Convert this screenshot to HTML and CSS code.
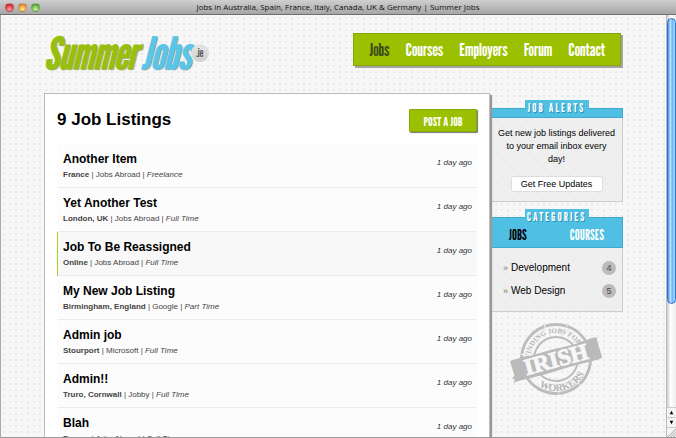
FILE: index.html
```html
<!DOCTYPE html>
<html lang="en">
<head>
<meta charset="utf-8">
<title>Jobs in Australia, Spain, France, Italy, Canada, UK &amp; Germany | Summer Jobs</title>
<link rel="stylesheet" href="styles.css">
</head>
<body>
<div class="titlebar">
  <div class="lights"><span class="light red"></span><span class="light amber"></span><span class="light green"></span></div>
  <div class="window-title">Jobs in Australia, Spain, France, Italy, Canada, UK &amp; Germany | Summer Jobs</div>
</div>
<div class="window">
  <div class="page">
    <div class="container">
      <header class="header">
        <a class="logo" href="#"><span class="logo-summer">Summer</span><span class="logo-jobs">Jobs</span><span class="logo-ie">.ie</span></a>
        <nav class="nav">
          <a class="current" href="#">Jobs</a><a href="#">Courses</a><a href="#">Employers</a><a href="#">Forum</a><a href="#">Contact</a>
        </nav>
      </header>
      <div class="columns">
        <main class="card">
          <div class="card-head">
            <h1>9 Job Listings</h1>
            <button class="post" type="button">POST A JOB</button>
          </div>
          <ul class="jobs">
            <li class="job"><div><h2>Another Item</h2><p><b>France</b> | Jobs Abroad | <i>Freelance</i></p></div><time>1 day ago</time></li>
            <li class="job"><div><h2>Yet Another Test</h2><p><b>London, UK</b> | Jobs Abroad | <i>Full Time</i></p></div><time>1 day ago</time></li>
            <li class="job active"><div><h2>Job To Be Reassigned</h2><p><b>Online</b> | Jobs Abroad | <i>Full Time</i></p></div><time>1 day ago</time></li>
            <li class="job"><div><h2>My New Job Listing</h2><p><b>Birmingham, England</b> | Google | <i>Part Time</i></p></div><time>1 day ago</time></li>
            <li class="job"><div><h2>Admin job</h2><p><b>Stourport</b> | Microsoft | <i>Full Time</i></p></div><time>1 day ago</time></li>
            <li class="job"><div><h2>Admin!!</h2><p><b>Truro, Cornwall</b> | Jobby | <i>Full Time</i></p></div><time>1 day ago</time></li>
            <li class="job"><div><h2>Blah</h2><p><b>France</b> | Jobs Abroad | <i>Full Time</i></p></div><time>1 day ago</time></li>
          </ul>
        </main>
        <aside class="sidebar">
          <section class="panel">
            <h3 class="tab">JOB ALERTS</h3>
            <div class="strip"></div>
            <div class="panel-body alerts">
              <p>Get new job listings delivered to your email inbox every day!</p>
              <button class="updates" type="button">Get Free Updates</button>
            </div>
          </section>
          <section class="panel">
            <h3 class="tab">CATEGORIES</h3>
            <div class="strip tabs"><a class="current" href="#">JOBS</a><a href="#">COURSES</a></div>
            <ul class="panel-body categories">
              <li><span class="mark">»</span><a href="#">Development</a><span class="count">4</span></li>
              <li><span class="mark">»</span><a href="#">Web Design</a><span class="count">5</span></li>
            </ul>
          </section>
          <svg class="stamp" viewBox="0 0 94 76" role="img" aria-label="Finding jobs for Irish workers">
            <defs>
              <path id="arc-top" d="M21 38a26 26 0 0 1 52 0"/>
              <path id="arc-bottom" d="M15 38a32 32 0 0 0 64 0"/>
            </defs>
            <g transform="rotate(-15 47 38)">
              <circle class="ring" cx="47" cy="38" r="34.500" stroke-width="3" stroke-dasharray="37 1 22 .6 41 .8 19 1"/>
              <circle class="ring" cx="47" cy="38" r="22" stroke-width="2"/>
              <text class="arc-text small"><textPath href="#arc-top" startOffset="50%">FINDING JOBS FOR</textPath></text>
              <text class="arc-text"><textPath href="#arc-bottom" startOffset="50%">WORKERS</textPath></text>
              <path class="band" d="M2 28l15-.5 1 1 26-.5 25 .5 18-1.500 5 .5-.5 4 .5 17-4 1-26-.5-30 1-25-.5-7 .5 2-3-2.500-1 3-3z"/>
              <text class="irish" x="47" y="46">IRISH</text>
            </g>
          </svg>
        </aside>
      </div>
    </div>
  </div>
  <div class="scrollbar">
    <div class="thumb"></div>
    <div class="arrow"><svg viewBox="0 0 10 10"><path d="M5 3l2 4H3z"/></svg></div>
    <div class="arrow"><svg viewBox="0 0 10 10"><path d="M5 7l2-4H3z"/></svg></div>
    <div class="grip"><svg viewBox="0 0 10 10"><path d="M1 10l9-9M4 10l6-6M7 10l3-3" fill="none" stroke="#999"/></svg></div>
  </div>
</div>
</body>
</html>
```

FILE: styles.css
```css
:root {
  --narrow: "League Gothic", "Roboto Condensed", "Open Sans Condensed", "Noto Sans CJK JP", sans-serif;
}

* { box-sizing: border-box; margin: 0; padding: 0; }

body {
  display: flex;
  flex-direction: column;
  height: 100vh;
  overflow: hidden;
  background: #f6f6f6;
  color: #000;
  font-family: "Liberation Sans", Arial, sans-serif;
  font-size: 10px;
}

a { color: inherit; text-decoration: none; }
ul { list-style: none; }
button { font-family: inherit; cursor: pointer; }

.titlebar {
  display: grid;
  grid-template-columns: 40px 1fr 40px;
  align-items: center;
  flex: none;
  height: 15px;
  background: linear-gradient(#cfcfcf, #a6a6a6);
  border-bottom: 1px solid #6f6f6f;
}
.lights { display: flex; gap: 4px; padding-left: 5px; }
.light { width: 9px; height: 9px; border-radius: 50%; border: 1px solid #8886; }
.red { background: radial-gradient(circle at 50% 75%, #ffb0a8, #e0343a 60%, #a01820); }
.amber { background: radial-gradient(circle at 50% 75%, #ffe9a0, #f09a38 60%, #b06010); }
.green { background: radial-gradient(circle at 50% 75%, #d0f5a0, #68b648 60%, #3a7a20); }
.window-title {
  text-align: center;
  color: #111;
  font-family: "Open Sans", sans-serif;
  font-size: 8px;
  line-height: 14px;
}

.window {
  display: flex;
  flex: 1;
  min-height: 0;
  border-left: 1px solid #aaa;
  border-bottom: 1px solid #999;
}
.page {
  flex: 1;
  overflow: hidden;
  padding: 0 43px;
  background: radial-gradient(circle, #e9e9e9 0, #e9e9e9 1px, transparent 1px) 0 0 / 6px 6px #f7f7f7;
}
.container { max-width: 640px; margin: 0 auto; }

.header {
  display: flex;
  justify-content: space-between;
  align-items: flex-start;
  height: 78px;
  padding-top: 18px;
}
.logo {
  display: flex;
  align-items: center;
  font-family: var(--narrow);
  font-size: 44px;
  font-style: italic;
  font-weight: 400;
  line-height: 40px;
}
.logo-summer { color: #97bf0d; -webkit-text-stroke: 1px #97bf0d; text-shadow: 1px 1px 1px #999; }
.logo-jobs { margin-left: 4px; color: #5bc5e8; -webkit-text-stroke: 1px #5bc5e8; text-shadow: 1px 1px 1px #999; }
.logo-ie {
  width: 18px;
  height: 18px;
  border-radius: 50%;
  background: linear-gradient(#e6e6e6, #cfcfcf);
  color: #555;
  font-size: 12px;
  font-style: normal;
  line-height: 18px;
  text-align: center;
}
.nav {
  display: flex;
  gap: 16px;
  margin-right: 2px;
  padding: 0 15px;
  background: #9bc000;
  border: 1px solid #86a60a;
  box-shadow: 2px 2px 0 #a3a3a3;
  color: #fff;
  font-family: var(--narrow);
  font-size: 18px;
  font-weight: 400;
  line-height: 31px;
}
.nav .current { color: #3d4a1a; }

.columns { display: flex; align-items: flex-start; }
.card {
  flex: 1;
  padding: 12px;
  background: #fff;
  border: 1px solid #bbb;
  box-shadow: 2px 2px 1px #999;
  position: relative;
}
.card-head { display: flex; justify-content: space-between; height: 38px; padding-top: 3px; }
h1 { font-size: 17px; line-height: 22px; }
.post {
  width: 68px;
  height: 23px;
  background: #9bc000;
  border: 1px solid #89a80c;
  border-radius: 1px;
  box-shadow: 1px 1px 1px #777;
  color: #fff;
  font-family: var(--narrow);
  font-size: 13px;
  font-weight: 400;
  line-height: 20px;
  white-space: nowrap;
}
.job {
  display: flex;
  justify-content: space-between;
  height: 44px;
  padding: 7px 5px 0;
  background: #fcfcfc;
  box-shadow: inset 0 -1px 0 #ebebeb;
  border-left: 1px solid transparent;
}
.job.active { background: #f8f8f8; border-left-color: #a4d030; }
.job h2 { font-size: 12px; line-height: 16px; }
.job p { margin-top: 2px; color: #444; font-size: 8px; line-height: 12px; }
.job time { color: #333; font-size: 8px; font-style: italic; line-height: 24px; }

.sidebar { width: 133px; padding-top: 7px; }
.panel { margin-bottom: 7px; }
.tab {
  width: 64px;
  height: 16px;
  margin: 0 auto -8px;
  position: relative;
  background: #4fbfe3;
  color: #fff;
  font-family: var(--narrow);
  font-size: 12px;
  font-weight: 400;
  letter-spacing: 2px;
  line-height: 16px;
  text-align: center;
  text-shadow: 1px 1px 0 #2c8fb0;
  white-space: nowrap;
}
.strip { height: 10px; background: #4fbfe3; border: 1px solid #42a9cb; }
.tabs {
  display: flex;
  justify-content: space-between;
  height: 31px;
  padding: 8px 18px 0;
  color: #fff;
  font-family: var(--narrow);
  font-size: 14px;
  line-height: 18px;
}
.tabs .current { color: #000; }
.panel-body {
  background: repeating-linear-gradient(45deg, #ececec 0, #ececec 1px, #f1f1f1 1px, #f1f1f1 2px);
  border: 1px solid #ccc;
  border-top: 0;
}
.alerts { padding: 9px 6px; text-align: center; }
.alerts p { font-size: 9px; line-height: 13px; }
.updates {
  width: 92px;
  height: 16px;
  margin-top: 10px;
  background: #fff;
  border: 1px solid #ddd;
  border-radius: 3px;
  font-size: 9px;
  line-height: 14px;
}
.categories { padding: 8px 6px 9px; }
.categories li { display: flex; align-items: center; height: 23px; font-size: 10px; }
.mark { width: 14px; padding-left: 6px; color: #777; font-size: 9px; }
.count {
  width: 14px;
  height: 14px;
  margin-left: auto;
  border-radius: 50%;
  background: #bbb;
  color: #444;
  font-size: 9px;
  line-height: 14px;
  text-align: center;
}

.stamp { display: block; width: 94px; height: 76px; margin: 9px 0 0 19px; }
.ring { fill: none; stroke: #bdbdbd; }
.band { fill: #bababa; }
.arc-text, .irish { font-family: "Liberation Serif", serif; font-weight: 700; text-anchor: middle; fill: #b5b5b5; }
.arc-text { font-size: 10px; }
.arc-text.small { font-size: 7px; }
.irish { fill: #f7f7f7; stroke: #f7f7f7; font-size: 23px; }

.scrollbar {
  display: flex;
  flex-direction: column;
  width: 10px;
  background: linear-gradient(90deg, #ccc, #fff 40%, #eee);
  border-left: 1px solid #bbb;
}
.thumb {
  height: 286px;
  margin: 3px 0 auto;
  border-radius: 5px;
  border: 1px solid #2f6fd0;
  background: linear-gradient(90deg, #4a8de8, #c0e2fb 35%, #6ab5f5 60%, #a5dcff);
}
.arrow, .grip { height: 10px; background: #f4f4f4; border-top: 1px solid #ccc; }
.arrow svg, .grip svg { display: block; width: 9px; height: 9px; }
```
